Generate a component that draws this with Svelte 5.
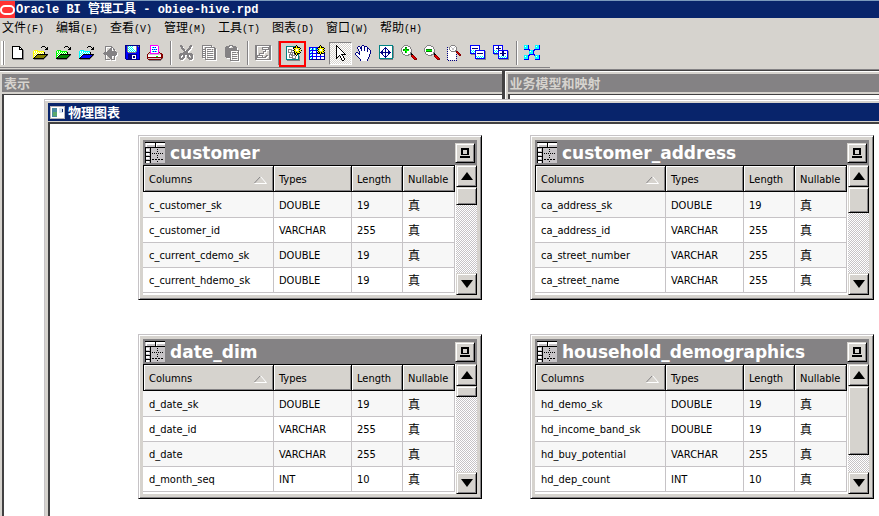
<script>
  const palette = {
    K: '#000000', W: '#ffffff', G: '#848284', L: '#b5b2ad', Y: '#ffff00', O: '#848200',
    g: '#008200', n: '#00ff00', B: '#0000ff', b: '#000084', c: '#00ffff', t: '#008284',
    R: '#e00000', r: '#840000', M: '#ff00ff', A: '#f7c600', P: '#c6c3c6'
  };

  const folder = [
    '................',
    '..........KKK...',
    '.........K...K.K',
    '..............KK',
    '.............KKK',
    '..pppp..........',
    '.pWpWppppppp....',
    '.pWpWpWpWpWpK...',
    '.ppWpWpWpWpWK...',
    '.pWpWKKKKKKKKKKK',
    '.ppWKqqqqqqqqqKG',
    '.pWKqqqqqqqqqKG.',
    '.pKqqqqqqqqqKG..',
    '.KKKKKKKKKKKG...',
    '..GGGGGGGGGG....',
    '................'
  ];
  const tint = (p, q) => folder.map((r) => r.replaceAll('p', p).replaceAll('q', q));

  const art = {
    new: [
      '................',
      '...KKKKKKKK.....',
      '...KWWWWWWKK....',
      '...KWWWWWWKWK...',
      '...KWWWWWWKKKK..',
      '...KWWWWWWWWWKG.',
      '...KWWWWWWWWWKG.',
      '...KWWWWWWWWWKG.',
      '...KWWWWWWWWWKG.',
      '...KWWWWWWWWWKG.',
      '...KWWWWWWWWWKG.',
      '...KWWWWWWWWWKG.',
      '...KWWWWWWWWWKG.',
      '...KKKKKKKKKKKG.',
      '....GGGGGGGGGGG.',
      '................'
    ],
    open: tint('Y', 'O'),
    openGreen: tint('n', 'g'),
    openBlue: tint('c', 'B'),
    check: [
      '................',
      '....GGGGGGG.....',
      '....G.....GG....',
      '....G....GG.G...',
      '....G...GGG.GG..',
      '....G..GGGG..G..',
      '....G.GGGGGGGGG.',
      '...GGGGGGGGGGGGG',
      '..GGGGGGGGGGGGGG',
      '...GGGGGGGGGGGGG',
      '....G.GGGGGGGGG.',
      '....G..GGGG..G..',
      '....G...GGG..G..',
      '....G....GG..G..',
      '....GGGGG.GGGG..',
      '................'
    ],
    save: [
      '.bbbbbbbbbbbbbbb',
      '.bBGcWcWcWWWGBGb',
      '.bBGWcWcWWWWGBBb',
      '.bBGcWcWcWWWGBBb',
      '.bBGWcWcWcWWGBBb',
      '.bBGcWcWcWcWGBBb',
      '.bBGWcWcWcWcGBBb',
      '.bBBGGGGGGGGBBBb',
      '.bBBBBBBBBBBBBBb',
      '.bBBbbbbbbbbbBBb',
      '.bBBbbbbWWWWbBBb',
      '.bBBbbbbWbbWbBBb',
      '.bBBbbbbWbbWbBBb',
      '.bBBbbbbWWWWbBBb',
      '..bbbbbbbbbbbbbb',
      '................'
    ],
    print: [
      '...MMMMMMMM.....',
      '...MWWWWWWWM....',
      '...MWcBcBWWM....',
      '...MWWWWWWWM....',
      '...MWBcBcBWM....',
      '...MWWWWWWWM....',
      '...MWcBcBcWM....',
      '..rMWWWWWWWMr...',
      '.rPMMMMMMMMMPrr.',
      'rPPPPPPPPPPPPPrr',
      'rWWWWWWWWWWWWWrr',
      'rWWWWWWWWnnWWWrr',
      'rrrrrrrrrrrrrrrr',
      'rPPPPPPPPPPPPPrG',
      '.rrrrrrrrrrrrrG.',
      '..GGGGGGGGGGGG..'
    ],
    cut: [
      '..GG........GG..',
      '..GGG......GGG..',
      '...GG......GG...',
      '...GGG....GGG...',
      '....GGG..GGG....',
      '.....GG.GGG.....',
      '......GGGG......',
      '.....GGGGG......',
      '..GGGGGGGGGGGG..',
      '.GGGGGGGGGGGGGG.',
      '.GGG.GG..GG.GGG.',
      '.GG..GG..GG..GG.',
      '.GG.GGG..GGG.GG.',
      '.GGGGG....GGGGG.',
      '..GGG......GGG..',
      '................'
    ],
    copy: [
      '.GGGGGGGGGG.....',
      '.G........G.....',
      '.G..GGGGGGGGGG..',
      '.G..G........GG.',
      '.GGGG.GGGG.G.GG.',
      '.G..G........GG.',
      '.GGGG.GGGGGG.GG.',
      '.G..G........GG.',
      '.GGGG.GGGGGG.GG.',
      '.G..G........GG.',
      '.GGGG.GGGGGG.GG.',
      '.G..G........GG.',
      '.GGGG.GGGGGG.GG.',
      '....G........GG.',
      '....GGGGGGGGGGG.',
      '................'
    ],
    paste: [
      '.....GGGG.......',
      '..GGGG..GGGG....',
      '.GGGG....GGGG...',
      '.GGGGGGGGGGGG...',
      '.GGGGGGGGGGGG...',
      '.GGGGGGGGGGGGGG.',
      '.GGGGGG.......G.',
      '.GGGGGG.GGGG.GG.',
      '.GGGGGG.......G.',
      '.GGGGGG.GGGGG.G.',
      '.GGGGGG.......G.',
      '.GGGGGG.GGGGG.G.',
      '..GGGGG.......G.',
      '......G.GGGGG.G.',
      '......G.......G.',
      '......GGGGGGGGG.'
    ],
    diagram: [
      'GGGGGGGGGGGGGGGG',
      'GG............GG',
      'GG.....GGGGGGGGG',
      'GG.....G.....GGG',
      'GG.....GGGGGGGGG',
      'GG........G...GG',
      'GG......GGG...GG',
      'GG......G.....GG',
      'GG..GGGGG.....GG',
      'GG..G.........GG',
      'GGGGGGGG...GG.GG',
      'GGG....G..GG..GG',
      'GGGGGGGGGGG...GG',
      'GG............GG',
      'GGGGGGGGGGGGGGGG',
      '................'
    ],
    newDiagram: [
      '..........K.....',
      'tttttttttKYK....',
      'tWWWWWWKKKYKKK..',
      'tWWWWWWKYYYYYYK.',
      'tWGGGGWWKYWWYK..',
      'tWGWWGGKYYWWYYYK',
      'tWGWWGWWKYYYYK..',
      'tWGGGGGGKYKYYYK.',
      'tWWWGWGWKKYKKK..',
      'tWWGGGGWGKYKt...',
      'tWWGWGGGGWKWt...',
      'tWWGWWGWWGWWtG..',
      'tWWGGGGWWGWWtG..',
      'tWWWWWGGGGWWtG..',
      'tttttttttttttG..',
      '.GGGGGGGGGGGGG..'
    ],
    newTable: [
      '...........K....',
      '..........KYK...',
      'BBBBBBBBBKKYKKK.',
      'BcWBcWcBKYYYYYYK',
      'BWcBcWcBcKYWWYK.',
      'BBBBBBBBKYYWWYYK',
      'BcWBWWWBWKYYYYK.',
      'BWcBWWWBKYKYKYYK',
      'BBBBBBBBBKKYKKbb',
      'BcWBWWWBWWWKWWWb',
      'BWcBWWWBWWWBWWWb',
      'BBBBBBBBBBBBBBBb',
      'BcWBWWWBWWWBWWWb',
      'BWcBWWWBWWWBWWWb',
      'Bbbbbbbbbbbbbbbb',
      '................'
    ],
    pointer: [
      '....K...........',
      '....KK..........',
      '....KWK.........',
      '....KWWK........',
      '....KWWWK.......',
      '....KWWWWK......',
      '....KWWWWWK.....',
      '....KWWWWWWK....',
      '....KWWWWWWWK...',
      '....KWWWWKKKKK..',
      '....KWWKWWK.....',
      '....KWK.KWWK....',
      '....KK..KWWK....',
      '....K....KWWK...',
      '.........KWWK...',
      '..........KK....'
    ],
    hand: [
      '.......bb.......',
      '...bb.bWWbbb....',
      '..bWWbbWWbWWb...',
      '..bWWbbWWbWWbb..',
      '...bWWbWWbWWbWb.',
      '...bWWbWWbWWbWWb',
      '....bWWWWWWWbWWb',
      '.bb.bWWWWWWWWWWb',
      'bWWbbWWWWWWWWWWb',
      'bWWWbWWWWWWWWWb.',
      '.bWWWWWWWWWWWWb.',
      '..bWWWWWWWWWWWb.',
      '...bWWWWWWWWWb..',
      '....bWWWWWWWWb..',
      '.....bWWWWWWb...',
      '.....bWWWWWWb...'
    ],
    fit: [
      '.tttttttttttttt.',
      '.tWWWWWWWWWWWWtG',
      '.tWWWWWbWWWWWWtG',
      '.tWWWWbbbWWWWWtG',
      '.tWWWbWbWbWWWWtG',
      '.tWWbWWbWWbWWWtG',
      '.tWbbWWbWWbbWWtG',
      '.tbbbbbbbbbbbWtG',
      '.tWbbWWbWWbbWWtG',
      '.tWWbWWbWWbWWWtG',
      '.tWWWbWbWbWWWWtG',
      '.tWWWWbbbWWWWWtG',
      '.tWWWWWbWWWWWWtG',
      '.tttttttttttttt.',
      '..GGGGGGGGGGGGG.',
      '................'
    ],
    zoomIn: [
      '...GGGG.........',
      '..GWWWWGG.......',
      '.GWWggWWWG......',
      'GWWWgnWWWG......',
      'GWggngggWWG.....',
      'GWgnnnnnWWG.....',
      'GWWWgnWWWWG.....',
      '.GWWgnWWWGG.....',
      '.GWWWWWWWGK.....',
      '..GGWWWGGGKK....',
      '....GGGG..rRr...',
      '..........rRRr..',
      '...........rRRr.',
      '............rRRr',
      '.............rrr',
      '................'
    ],
    zoomOut: [
      '...GGGG.........',
      '..GWWWWGG.......',
      '.GWWWWWWWG......',
      'GWWWWWWWWG......',
      'GWggggggWWG.....',
      'GWnnnnnnWWG.....',
      'GWggggggWWG.....',
      '.GWWWWWWWGG.....',
      '.GWWWWWWWGK.....',
      '..GGWWWGGGKK....',
      '....GGGG..rRr...',
      '..........rRRr..',
      '...........rRRr.',
      '............rRRr',
      '.............rrr',
      '................'
    ],
    zoomArea: [
      '....GGGG........',
      '...GWWWWG.......',
      'b.GWPWWPWG......',
      '.WGWWPPWWG......',
      'bWGWWPPWWG......',
      '.WWGWWWWGG......',
      'bWWWGGGGGrr.....',
      '.WWWWWWWWrRr....',
      'bWWWWWWWW.rRr...',
      '.WWWWWWWWb.rRr..',
      'bWWWWWWWW...rr..',
      '.WWWWWWWWb......',
      'bWWWWWWWW.......',
      '.WWWWWWWWb......',
      'bWWWWWWWW.......',
      '.b.b.b.b.b......'
    ],
    collapse: [
      'BBBBBBBBBB......',
      'BWWWWWWWWB......',
      'BWWWWWWWWB......',
      'BWbbbbbbWB......',
      'BWWWWWWWWB......',
      'BcWcWBBBBBBBBBB.',
      'BWcWcBWWWWWWWWBG',
      'BcWcWBWWWWWWWWBG',
      'BBBBBBWbbbbbbWBG',
      '.GGGGBWWWWWWWWBG',
      '.....BWWWWWWWWBG',
      '.....BcWcWcWcWBG',
      '.....BWcWcWcWcBG',
      '.....BBBBBBBBBBG',
      '......GGGGGGGGGG',
      '................'
    ],
    expand: [
      'BBBBBBBBBB......',
      'BWWWWbWWWB......',
      'BWWWWbWWWB......',
      'BWWbbbbbWB......',
      'BWWWWbWWWB......',
      'BcWcWBBBBBBBBBB.',
      'BWcWcBWWWbbWWWBG',
      'BcWcWBWWWbbWWWBG',
      'BBBBBBWbbbbbbWBG',
      '.GGGGBWWWbbWWWBG',
      '.....BWWWbbWWWBG',
      '.....BcWcWcWcWBG',
      '.....BWcWcWcWcBG',
      '.....BBBBBBBBBBG',
      '......GGGGGGGGGG',
      '................'
    ],
    layout: [
      'ccccB......ccccB',
      'cWccB......cWccB',
      'ccccB......ccccB',
      'ccccB......ccccB',
      'BBBBBB....BBBBBB',
      '.....BcccBB.....',
      '.....cWccB......',
      '.....ccccB......',
      '.....ccccB......',
      '.....BBBBBB.....',
      'ccccBB....BccccB',
      'cWccB......cWccB',
      'ccccB......ccccB',
      'ccccB......ccccB',
      'BBBBB......BBBBB',
      '................'
    ]
  };

  function trace(rows) {
    const out = {};
    rows.forEach((row, y) => {
      for (let x = 0; x < row.length; ) {
        const ch = row[x];
        let end = x + 1;
        while (row[end] === ch) end++;
        if (ch !== '.') out[ch] = (out[ch] ?? '') + `M${x} ${y}h${end - x}v1H${x}z`;
        x = end;
      }
    });
    return Object.entries(out);
  }

  const tools = [
    [['new', '新建'], ['open', '打开'], ['openGreen', '联机打开'], ['openBlue', '打开多用户'], ['check', '检入更改', 'off'], ['save', '保存'], ['print', '打印']],
    [['cut', '剪切', 'off'], ['copy', '复制', 'off'], ['paste', '粘贴', 'off']],
    [['diagram', '业务模型图表', 'off']],
    [['newDiagram', '物理图表', 'marked'], ['newTable', '新建物理表'], ['pointer', '选择', 'pressed'], ['hand', '平移'], ['fit', '适合窗口'], ['zoomIn', '放大'], ['zoomOut', '缩小'], ['zoomArea', '缩放选区'], ['collapse', '全部折叠'], ['expand', '全部展开']],
    [['layout', '自动布局']]
  ];

  const menus = [['文件', 'F'], ['编辑', 'E'], ['查看', 'V'], ['管理', 'M'], ['工具', 'T'], ['图表', 'D'], ['窗口', 'W'], ['帮助', 'H']];

  const tables = [
    { name: 'customer', thumb: 18, rows: [['c_customer_sk', 'DOUBLE', 19], ['c_customer_id', 'VARCHAR', 255], ['c_current_cdemo_sk', 'DOUBLE', 19], ['c_current_hdemo_sk', 'DOUBLE', 19]] },
    { name: 'customer_address', thumb: 26, rows: [['ca_address_sk', 'DOUBLE', 19], ['ca_address_id', 'VARCHAR', 255], ['ca_street_number', 'VARCHAR', 255], ['ca_street_name', 'VARCHAR', 255]] },
    { name: 'date_dim', thumb: 11, rows: [['d_date_sk', 'DOUBLE', 19], ['d_date_id', 'VARCHAR', 255], ['d_date', 'VARCHAR', 255], ['d_month_seq', 'INT', 10]] },
    { name: 'household_demographics', thumb: 69, rows: [['hd_demo_sk', 'DOUBLE', 19], ['hd_income_band_sk', 'DOUBLE', 19], ['hd_buy_potential', 'VARCHAR', 255], ['hd_dep_count', 'INT', 10]] }
  ];
</script>

<div class="app">
  <header class="titlebar">
    <svg class="logo" width="16" height="17" viewBox="0 0 16 17" aria-hidden="true">
      <rect width="15" height="17" fill="#f33" />
      <rect x="1" y="5" width="13" height="8" rx="4" fill="none" stroke="#fff" stroke-width="2" />
    </svg>
    <h1>Oracle BI <span>管理工具</span> - obiee-hive.rpd</h1>
  </header>

  <nav class="menubar">
    {#each menus as [label, key]}
      <button>{label}<span class="key">({key})</span></button>
    {/each}
  </nav>

  <div class="toolbar" role="toolbar" aria-label="工具栏">
    <i class="grip"></i>
    {#each tools as group, g}
      {#if g > 0}<i class="sep"></i>{/if}
      {#each group as [id, label, state]}
        <button class={state} aria-label={label} disabled={state === 'off'}>
          <svg width="17" height="17" viewBox="0 0 17 17" shape-rendering="crispEdges">
            {#if state === 'off'}
              {#each trace(art[id]) as [, d]}<path {d} fill="#fff" transform="translate(1 1)" />{/each}
            {/if}
            {#each trace(art[id]) as [ch, d]}<path {d} fill={palette[ch]} />{/each}
          </svg>
        </button>
      {/each}
    {/each}
  </div>

  <main>
    <section class="pane left"><h2>表示</h2><div class="well"></div></section>
    <section class="pane right"><h2>业务模型和映射</h2><div class="well"></div></section>

    <section class="child">
      <h2>
        <svg width="15" height="13" viewBox="0 0 15 13" aria-hidden="true" shape-rendering="crispEdges">
          <path d="M0 0h15v13H0z" fill="#b5b2b5" />
          <path d="M1 1h13v11H1z" fill="#fff" />
          <path d="M2 2h5v9H2z" fill="#4a8aa0" />
          <path d="M3 6h4v4H3z" fill="#5aa86a" />
          <path d="M9 2h4v5H9z" fill="#d6e3ef" />
          <path d="M12 3h1v3h-1z" fill="#08246b" />
        </svg>
        物理图表
      </h2>
      <div class="canvas">
        {#each tables as t}
          <article class="card">
            <div class="cardhead">
              <svg width="20" height="21" viewBox="0 0 20 21" aria-hidden="true" shape-rendering="crispEdges">
                <path d="M0 0h20v21H0z" fill="#c6c3c6" />
                <path d="M0 0h20v1H0zM0 5h20v1H0zM10 0h1v6h-1zM0 6h1v15H0zM5 5h1v16H5zM0 10h6v1H0zM0 14h6v1H0zM0 18h6v1H0z" fill="#000" />
                <path d="M1 1h9v2H1zM11 1h9v2h-9zM1 1h1v4H1zM11 1h1v4h-1zM1 7h3v2H1zM1 11h3v2H1zM1 15h3v2H1zM1 19h3v2H1z" fill="#fff" />
                <path d="M7 11h1v1H7zM9 11h1v1H9zM11 11h1v1h-1zM13 11h1v1h-1zM15 11h1v1h-1zM17 11h1v1h-1zM7 17h2v1H7zM10 17h2v1h-2zM13 17h2v1h-2zM16 17h2v1h-2zM12 7h1v1h-1zM12 9h1v1h-1zM12 13h1v1h-1zM12 15h1v1h-1zM12 19h1v1h-1z" fill="#000" />
              </svg>
              <h3>{t.name}</h3>
              <button class="bevel size" aria-label="还原">
                <svg width="10" height="10" viewBox="0 0 10 10" shape-rendering="crispEdges">
                  <path d="M1 0h8v7H1zM3 2v4h4V2zM0 8h10v2H0z" fill="#000" fill-rule="evenodd" />
                </svg>
              </button>
            </div>
            <div class="grid">
              <table>
                <colgroup><col class="c1" /><col class="c2" /><col class="c3" /><col class="c4" /></colgroup>
                <thead>
                  <tr>
                    <th><div class="sort">Columns
                      <svg width="13" height="8" viewBox="0 0 13 8" aria-hidden="true"><path d="M6.500 .5L.5 7" stroke="#848284" fill="none" /><path d="M6.500 .5L12.500 7.500H.5" stroke="#fff" fill="none" /></svg>
                    </div></th>
                    <th>Types</th><th>Length</th><th>Nullable</th>
                  </tr>
                </thead>
                <tbody>
                  {#each t.rows as r}
                    <tr>{#each r as cell}<td>{cell}</td>{/each}<td class="flag">真</td></tr>
                  {/each}
                </tbody>
              </table>
              <div class="scroll">
                <button class="bevel arrow" aria-label="向上滚动"><svg width="12" height="8" viewBox="0 0 12 8"><path d="M0 8L6 0l6 8z" /></svg></button>
                <div class="bevel thumb" style="height: {t.thumb}px"></div>
                <button class="bevel arrow down" aria-label="向下滚动"><svg width="12" height="8" viewBox="0 0 12 8"><path d="M0 0l6 8 6-8z" /></svg></button>
              </div>
            </div>
          </article>
        {/each}
      </div>
    </section>
  </main>
</div>

<style>
  .app {
    --face: #d6d3ce;
    --navy: #08246b;
    --gray: #848284;
    --line: #c6c3c6;
    display: flex;
    flex-direction: column;
    min-height: 100vh;
    overflow: hidden;
    background: var(--face);
    color: #000;
    font: 12px/16px 'Liberation Sans', 'Noto Sans CJK SC', sans-serif;
  }
  h1, h2, h3 { margin: 0; }
  button {
    margin: 0;
    padding: 0;
    border: 0;
    background: none;
    color: inherit;
    font: inherit;
  }
  svg { display: block; }

  .titlebar {
    display: flex;
    align-items: center;
    height: 17px;
    border-top: 1px solid #7b9abd;
    background: var(--navy);
  }
  .titlebar h1 {
    color: #fff;
    font: bold 12px/16px 'Liberation Mono', 'Noto Sans CJK SC', monospace;
    white-space: pre;
  }

  .menubar {
    display: flex;
    gap: 12px;
    height: 20px;
    padding: 0 2px;
  }
  .menubar button {
    width: 42px;
    text-align: left;
    white-space: nowrap;
    font-family: 'Noto Sans CJK SC', sans-serif;
  }
  .key { font: 10px/16px 'Liberation Mono', monospace; }

  .toolbar {
    display: flex;
    align-items: center;
    align-self: flex-start;
    box-sizing: border-box;
    width: 550px;
    height: 30px;
    margin-bottom: 1px;
    padding: 3px 0 2px;
    border-bottom: 1px solid var(--gray);
  }
  .toolbar button {
    position: relative;
    display: flex;
    align-items: center;
    flex: none;
    box-sizing: border-box;
    width: 23px;
    height: 23px;
    padding-left: 3px;
  }
  .grip {
    width: 2px;
    height: 24px;
    margin: 0 2px 0 1px;
    border-right: 1px solid var(--gray);
    box-shadow: 1px 0 #fff;
    background: #fff;
  }
  .sep {
    width: 1px;
    height: 24px;
    margin: 0 3px;
    border-right: 1px solid #fff;
    background: var(--gray);
  }
  .toolbar .marked::after {
    content: '';
    position: absolute;
    inset: -1px 0 -2px -4px;
    border: 2px solid #f00;
  }
  .toolbar .pressed {
    border: 1px solid;
    border-color: var(--gray) #fff #fff var(--gray);
    padding-left: 2px;
    background: repeating-conic-gradient(#fff 0 25%, var(--face) 0 50%) 0 0 / 2px 2px;
  }

  main {
    position: relative;
    display: flex;
    flex: 1;
    gap: 3px;
    border-top: 1px solid var(--gray);
    background: #424142;
  }
  main h2 {
    color: var(--face);
    font: bold 13px/18px 'Noto Sans CJK SC', sans-serif;
  }
  .pane {
    display: flex;
    flex-direction: column;
    box-sizing: border-box;
    margin-top: 1px;
    padding: 2px 0 0 2px;
    border-left: 1px solid #fff;
    border-top: 1px solid #fff;
    background: var(--face);
  }
  .left { flex: 503; margin-left: -1px; }
  .right { flex: 374; }
  .pane h2 { padding-left: 2px; margin-bottom: 2px; background: var(--gray); }
  .well {
    flex: 1;
    border-left: 2px solid #424142;
    border-top: 1px solid #424142;
    background: #fff;
  }

  .child {
    position: absolute;
    inset: 29px 0 0 44px;
    display: flex;
    flex-direction: column;
    padding: 3px 0 0 2px;
    border: solid var(--line);
    border-width: 1px 0 0 1px;
    background: linear-gradient(#fff, #fff) 0 0 / 100% 1px no-repeat, var(--face);
  }
  .child h2 {
    display: flex;
    align-items: center;
    gap: 3px;
    padding-left: 2px;
    margin-left: 1px;
    background: var(--navy);
    color: #fff;
  }
  .canvas {
    display: grid;
    grid-template-columns: 344px 344px;
    align-content: start;
    gap: 34px 48px;
    flex: 1;
    margin: 1px 0 0 1px;
    padding: 11px 0 0 88px;
    border: solid #424142;
    border-width: 2px 0 0 2px;
    background: #fff;
  }

  .card {
    box-sizing: border-box;
    padding: 4px;
    border: 1px solid;
    border-color: var(--line) #000 #000 var(--line);
    box-shadow: inset 1px 1px #fff, inset -1px -1px var(--gray);
    background: var(--face);
  }
  .cardhead {
    display: flex;
    align-items: center;
    height: 25px;
    padding: 0 2px;
    background: var(--gray);
  }
  h3 {
    flex: 1;
    padding-left: 5px;
    color: #fff;
    font: bold 17px/24px 'DejaVu Sans', sans-serif;
  }
  .bevel {
    box-sizing: border-box;
    border: 1px solid;
    border-color: var(--face) #000 #000 var(--face);
    box-shadow: inset 1px 1px #fff, inset -1px -1px var(--gray);
    background: var(--face);
  }
  .size { display: grid; place-items: center; width: 20px; height: 20px; }

  .grid { display: flex; height: 130px; overflow: hidden; background: #fff; }
  table {
    flex: 1;
    align-self: flex-start;
    margin-right: 1px;
    border-collapse: separate;
    border-spacing: 0;
    table-layout: fixed;
    font: 11px/16px 'DejaVu Sans Condensed', 'Noto Sans CJK SC', sans-serif;
  }
  .c1 { width: 130px; }
  .c2 { width: 78px; }
  .c3 { width: 51px; }
  th, td { box-sizing: border-box; text-align: left; white-space: nowrap; }
  th {
    height: 27px;
    padding: 2px 0 0 5px;
    border: solid #000;
    border-width: 1px 0 1px 1px;
    box-shadow: inset 1px 1px #fff, inset -1px -1px var(--gray);
    background: var(--face);
    font-weight: normal;
  }
  th:last-child { border-right-width: 1px; }
  .sort { display: flex; align-items: center; justify-content: space-between; padding-right: 6px; }
  td {
    height: 25px;
    padding: 2px 0 0 5px;
    border-left: 1px solid var(--line);
    border-bottom: 1px solid var(--line);
  }
  td:first-child { padding-left: 6px; border-left: 0; }
  tbody tr:first-child td { height: 26px; }
  tbody tr:nth-child(odd) { background: #f7f7f7; }
  .flag { border-right: 1px solid var(--line); font-size: 12px; }
  .scroll {
    display: flex;
    flex-direction: column;
    width: 21px;
    background: repeating-conic-gradient(#fff 0 25%, var(--line) 0 50%) 0 0 / 2px 2px;
  }
  .arrow { display: grid; place-items: center; flex: none; height: 22px; }
  .thumb { flex: none; }
  .down { margin-top: auto; }
</style>
